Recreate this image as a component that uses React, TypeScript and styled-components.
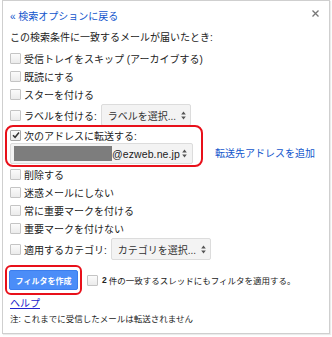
import React from "react";
import styled, { createGlobalStyle } from "styled-components";

const GlobalStyle = createGlobalStyle`
	body {
		margin: 0;
		background: #ffffff;
		font-family: "Liberation Sans", "Noto Sans CJK JP", sans-serif;
		color: #222;
	}
`;

const Page = styled.div`
	width: 332px;
	height: 337px;
	padding-left: 2px;
	box-sizing: border-box;
	overflow: hidden;
`;

const Panel = styled.div`
	width: 328px;
	height: 334px;
	box-sizing: border-box;
	border: 1px solid #cfcfcf;
	box-shadow: 1px 1px 1px rgba(0, 0, 0, 0.08);
	padding: 0 7px;
	display: flex;
	flex-direction: column;
	font-size: 10px;
`;

const Header = styled.div`
	height: 29px;
	display: flex;
	align-items: center;
	justify-content: space-between;
`;

const BackLink = styled.a`
	color: #1155cc;
	text-decoration: none;
	cursor: pointer;
`;

const Close = styled.span`
	display: flex;
	margin-right: 3px;
	margin-top: -4px;
`;

const Heading = styled.div`
	height: 16px;
	line-height: 16px;
	margin-bottom: 3px;
	color: #222;
`;

const Row = styled.div<{ $h?: number }>`
	height: ${(p) => p.$h ?? 18}px;
	display: flex;
	align-items: center;
	color: #222;
	white-space: nowrap;
`;

const Box = styled.span<{ $checked?: boolean }>`
	width: 9px;
	height: 9px;
	border: 1px solid ${(p) => (p.$checked ? "#a8a8a8" : "#c4c4c4")};
	border-radius: 1px;
	background: linear-gradient(#fbfbfb, #ebebeb);
	margin-right: 3px;
	flex: none;
	display: flex;
	align-items: center;
	justify-content: center;
`;

const Select = styled.span`
	height: 22px;
	box-sizing: border-box;
	border: 1px solid #dcdcdc;
	border-radius: 2px;
	background: #f3f3f3;
	display: flex;
	align-items: center;
	gap: 5px;
	padding: 0 4px 0 6px;
	margin-left: 4px;
	color: #333;
	font-size: 10px;
`;

const ForwardArea = styled.div`
	display: flex;
	align-items: flex-end;
	padding-bottom: 1px;
`;

const ForwardBox = styled.div`
	position: relative;
	width: 183px;
	display: flex;
	flex-direction: column;

	&::after {
		content: "";
		position: absolute;
		top: -2px;
		bottom: -3px;
		left: -5px;
		right: -10px;
		border: 2.5px solid #e8101a;
		border-radius: 8px;
		pointer-events: none;
	}
`;

const AddressSelect = styled.span`
	height: 21px;
	box-sizing: border-box;
	border: 1px solid #dcdcdc;
	border-radius: 2px;
	background: #f3f3f3;
	display: flex;
	align-items: center;
	padding: 0 5px 0 3px;
	font-size: 10.5px;
	color: #222;
`;

const Redacted = styled.span`
	width: 98px;
	height: 15px;
	background: #7d7d7d;
	flex: none;
`;

const Address = styled.span`
	flex: 1;
	font-family: "Liberation Sans", sans-serif;
	font-weight: 500;
	letter-spacing: 0.1px;
`;

const AddLink = styled.a`
	margin-left: 22px;
	height: 21px;
	line-height: 21px;
	color: #1155cc;
	cursor: pointer;
`;

const ActionRow = styled.div`
	margin-top: 9px;
	display: flex;
	align-items: center;
`;

const ButtonFrame = styled.div`
	position: relative;
	margin-left: -1px;

	&::after {
		content: "";
		position: absolute;
		top: -5px;
		bottom: -5px;
		left: -4px;
		right: -4px;
		border: 2.5px solid #e8101a;
		border-radius: 6px;
		pointer-events: none;
	}
`;

const CreateButton = styled.button`
	width: 69px;
	height: 20px;
	border: 1px solid #3b7ded;
	border-radius: 2px;
	background: #4b8df8;
	color: #fff;
	font-family: "Noto Sans CJK JP", sans-serif;
	font-weight: 700;
	font-size: 8px;
	padding: 0;
	display: block;
`;

const ApplyLabel = styled.span`
	margin-left: 9px;
	display: flex;
	align-items: center;
	font-size: 8.5px;
	color: #222;

	b {
		margin: 0 2px 0 1px;
	}
`;

const Help = styled.a`
	margin-top: 6px;
	height: 16px;
	line-height: 16px;
	color: #2222cc;
	text-decoration: underline;
	align-self: flex-start;
`;

const Note = styled.div`
	height: 14px;
	line-height: 14px;
	font-size: 8.5px;
	color: #222;
`;

const Arrows = () => (
	<svg width="5" height="9" viewBox="0 0 5 9">
		<path d="M2.5 0.5 L4.8 3.5 H0.2 Z M2.5 8.5 L4.8 5.5 H0.2 Z" fill="#555" />
	</svg>
);

const Check: React.FC<{ checked?: boolean }> = ({ checked }) => (
	<Box $checked={checked}>
		{checked && (
			<svg width="8" height="8" viewBox="0 0 8 8">
				<path d="M1 4.2 L3.1 6.3 L7 1.6" stroke="#333" strokeWidth="1.5" fill="none" />
			</svg>
		)}
	</Box>
);

const App: React.FC = (): React.ReactElement => {
	return (
		<Page>
			<GlobalStyle />
			<Panel>
				<Header>
					<BackLink>« 検索オプションに戻る</BackLink>
					<Close>
						<svg width="7" height="7" viewBox="0 0 7 7">
							<path d="M0.5 0.5 L6.5 6.5 M6.5 0.5 L0.5 6.5" stroke="#777" strokeWidth="1.3" />
						</svg>
					</Close>
				</Header>
				<Heading>この検索条件に一致するメールが届いたとき:</Heading>
				<Row>
					<Check />
					受信トレイをスキップ (アーカイブする)
				</Row>
				<Row>
					<Check />
					既読にする
				</Row>
				<Row>
					<Check />
					スターを付ける
				</Row>
				<Row $h={24}>
					<Check />
					ラベルを付ける:
					<Select>
						ラベルを選択...
						<Arrows />
					</Select>
				</Row>
				<ForwardArea>
					<ForwardBox>
						<Row $h={16}>
							<Check checked />
							次のアドレスに転送する:
						</Row>
						<AddressSelect>
							<Redacted />
							<Address>@ezweb.ne.jp</Address>
							<Arrows />
						</AddressSelect>
					</ForwardBox>
					<AddLink>転送先アドレスを追加</AddLink>
				</ForwardArea>
				<Row>
					<Check />
					削除する
				</Row>
				<Row>
					<Check />
					迷惑メールにしない
				</Row>
				<Row>
					<Check />
					常に重要マークを付ける
				</Row>
				<Row>
					<Check />
					重要マークを付けない
				</Row>
				<Row $h={24}>
					<Check />
					適用するカテゴリ:
					<Select>
						カテゴリを選択...
						<Arrows />
					</Select>
				</Row>
				<ActionRow>
					<ButtonFrame>
						<CreateButton>フィルタを作成</CreateButton>
					</ButtonFrame>
					<ApplyLabel>
						<Check />
						<b>2</b> 件の一致するスレッドにもフィルタを適用する。
					</ApplyLabel>
				</ActionRow>
				<Help>ヘルプ</Help>
				<Note>注: これまでに受信したメールは転送されません</Note>
			</Panel>
		</Page>
	);
};

export default App;
